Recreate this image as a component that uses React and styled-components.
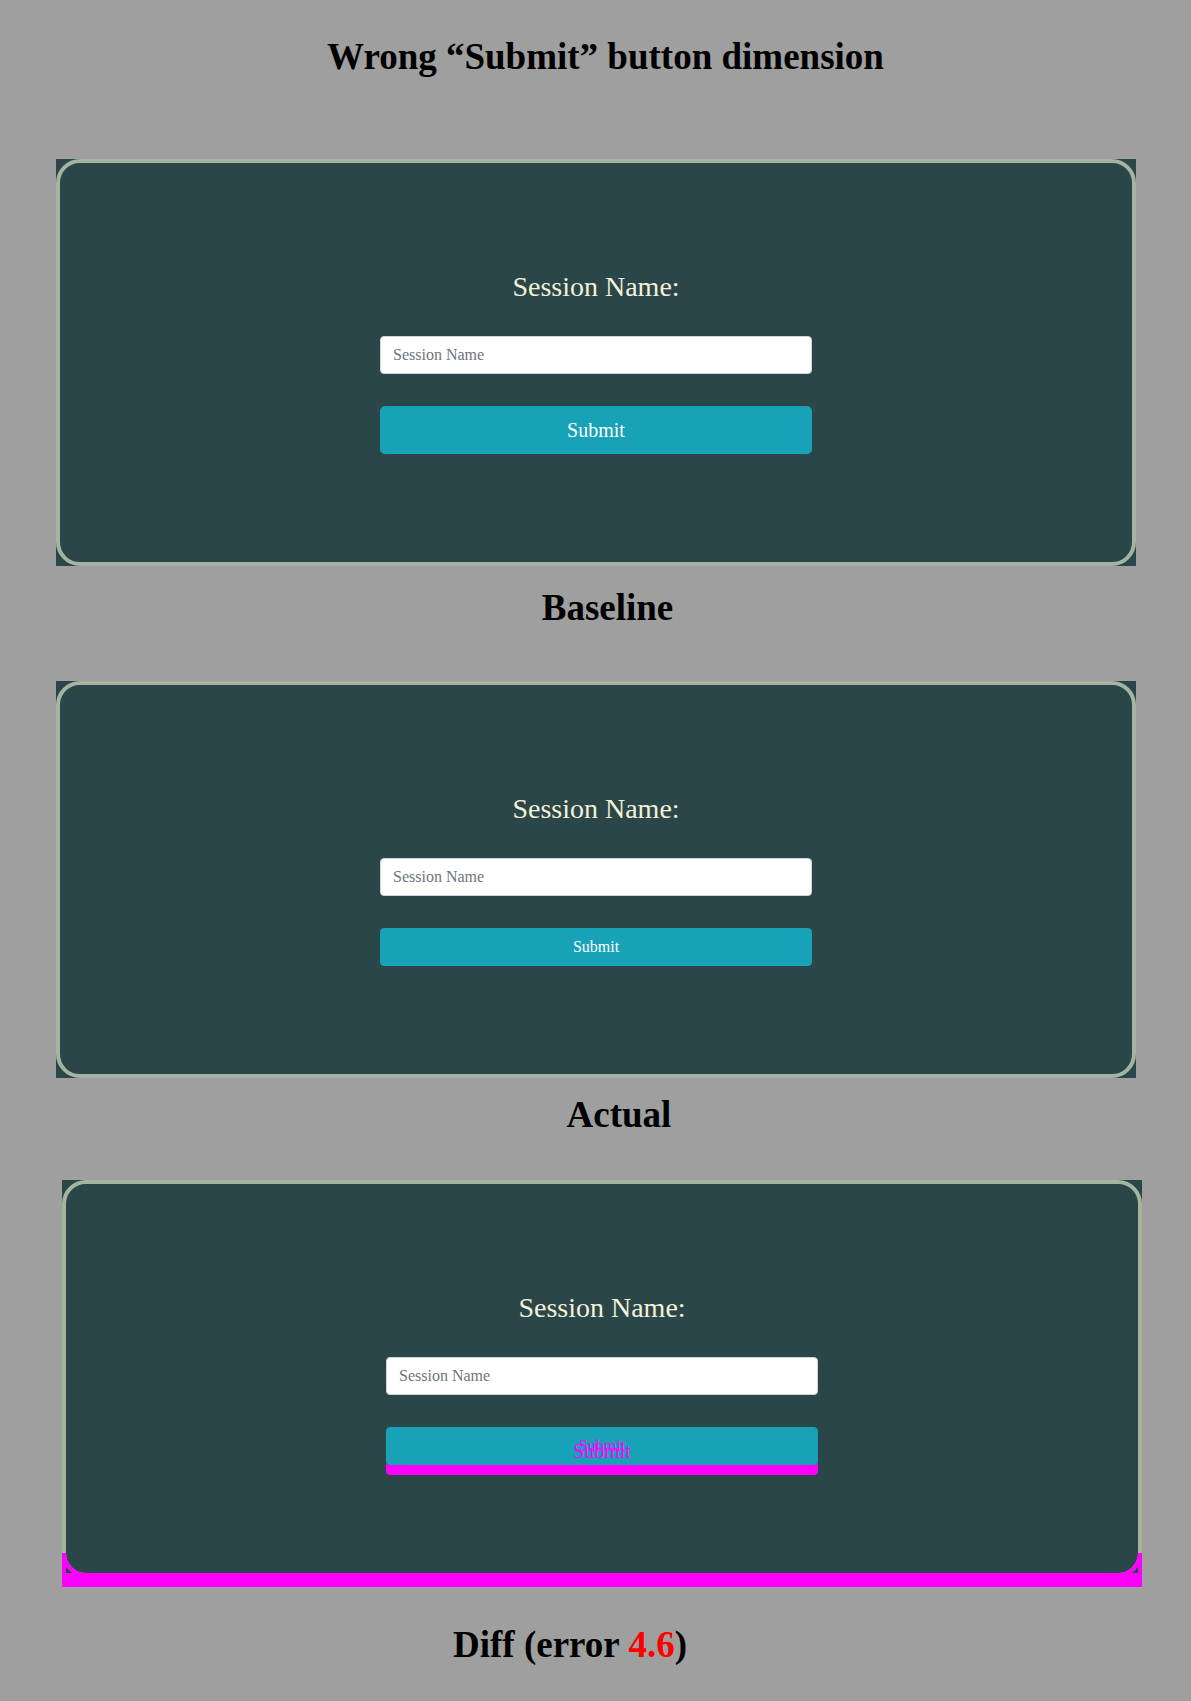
import React from "react";
import styled, { createGlobalStyle } from "styled-components";

const GlobalStyle = createGlobalStyle`
  html,
  body {
    margin: 0;
    padding: 0;
    background: #9f9f9f;
  }

  body {
    font-family: "Liberation Serif", "Times New Roman", serif;
  }
`;

const Page = styled.main`
  display: flex;
  flex-direction: column;
  align-items: flex-start;
  min-height: 1701px;
  padding-top: 35px;
  box-sizing: border-box;
`;

const Caption = styled.h2`
  width: 100%;
  box-sizing: border-box;
  margin: ${(p) => p.$mt || 0}px 0 0;
  padding: 0 ${(p) => Math.max(0, -p.$shift * 2)}px 0
    ${(p) => Math.max(0, p.$shift * 2)}px;
  font-family: "Liberation Serif", "Times New Roman", serif;
  font-weight: 700;
  font-size: 37px;
  line-height: 44px;
  text-align: center;
  color: #000;
`;

const Error = styled.span`
  color: #ff0000;
`;

const Frame = styled.section`
  position: relative;
  width: 1080px;
  margin: ${(p) => p.$mt}px 0 0 ${(p) => p.$left}px;
  background: #2b4648;
`;

const Card = styled.div`
  display: flex;
  flex-direction: column;
  align-items: center;
  gap: 32px;
  padding: 107px 0 108px;
  border: 4px solid #a5b4a0;
  border-radius: 24px;
`;

const Label = styled.label`
  font-size: 28px;
  line-height: 34px;
  color: #f3f1d8;
`;

const Input = styled.input`
  width: 432px;
  height: 38px;
  box-sizing: border-box;
  padding: 6px 12px;
  border: 1px solid #ced4da;
  border-radius: 4px;
  background: #fff;
  font-family: "Liberation Serif", "Times New Roman", serif;
  font-size: 16px;
  line-height: 24px;
  color: #495057;
  outline: none;

  &::placeholder {
    color: #6c757d;
  }
`;

const Button = styled.button`
  display: block;
  width: 432px;
  box-sizing: border-box;
  padding: ${(p) => (p.$size === "lg" ? "8px 16px" : "6px 12px")};
  border: 1px solid #17a2b8;
  border-radius: ${(p) => (p.$size === "lg" ? "4.8px" : "4px")};
  background: #17a2b8;
  font-family: "Liberation Serif", "Times New Roman", serif;
  font-size: ${(p) => (p.$size === "lg" ? "20px" : "16px")};
  line-height: ${(p) => (p.$size === "lg" ? "30px" : "24px")};
  color: ${(p) => p.$ink || "#fff"};
  text-align: center;
`;

/* diff pieces: magenta marks where actual and baseline disagree */
const DiffButton = styled.div`
  position: relative;
  width: 432px;
  height: 38px;
  border-radius: 4px;
  box-shadow: 0 10px 0 #ff00ff;
`;

const GhostText = styled.span`
  position: absolute;
  top: 0;
  left: 0;
  right: 0;
  height: 48px;
  font-size: 20px;
  line-height: 48px;
  text-align: center;
  color: #ff00ff;
  pointer-events: none;
`;

const DiffBand = styled.div`
  height: 10px;
  background: #ff00ff;
`;

const DiffEdge = styled.div`
  position: absolute;
  left: 0;
  right: 0;
  bottom: 0;
  height: 20px;
  border-left: 4px solid #ff00ff;
  border-right: 4px solid #ff00ff;
  border-bottom: 14px solid #ff00ff;

  &::before,
  &::after {
    content: "";
    position: absolute;
    bottom: -4px;
    width: 20px;
    height: 20px;
    border-bottom: 4px solid #ff00ff;
  }

  &::before {
    left: -4px;
    border-left: 4px solid #ff00ff;
    border-bottom-left-radius: 24px;
  }

  &::after {
    right: -4px;
    border-right: 4px solid #ff00ff;
    border-bottom-right-radius: 24px;
  }
`;

function SessionForm({ size, diff }) {
  return (
    <Card>
      <Label>Session Name:</Label>
      <Input type="text" placeholder="Session Name" />
      {diff ? (
        <DiffButton>
          <Button $size="md" $ink="#ff00ff">
            Submit
          </Button>
          <GhostText>Submit</GhostText>
        </DiffButton>
      ) : (
        <Button $size={size}>Submit</Button>
      )}
    </Card>
  );
}

export default function App() {
  return (
    <>
      <GlobalStyle />
      <Page>
        <Caption as="h1" $shift={10}>
          Wrong “Submit” button dimension
        </Caption>

        <Frame $mt={80} $left={56}>
          <SessionForm size="lg" />
        </Frame>
        <Caption $mt={20} $shift={12}>
          Baseline
        </Caption>

        <Frame $mt={51} $left={56}>
          <SessionForm size="md" />
        </Frame>
        <Caption $mt={15} $shift={23.5}>
          Actual
        </Caption>

        <Frame $mt={43} $left={62}>
          <SessionForm diff />
          <DiffBand />
          <DiffEdge />
        </Frame>
        <Caption $mt={36} $shift={-25.5}>
          Diff (error <Error>4.6</Error>)
        </Caption>
      </Page>
    </>
  );
}
